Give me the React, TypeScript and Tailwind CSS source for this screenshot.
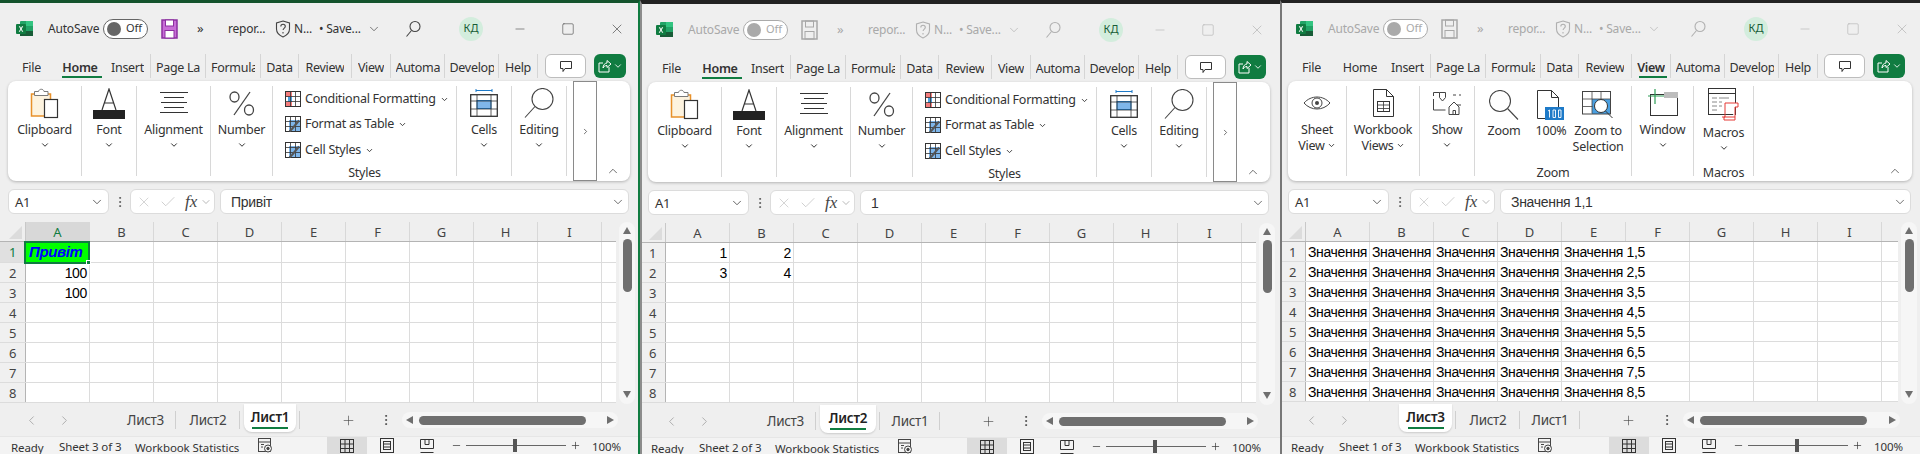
import React from 'react'
import { ChevronDown, ChevronUp, ChevronLeft, ChevronRight, Minus, Plus, Square, X, Check, MoreVertical } from 'lucide-react'

const ui = "font-['Noto_Sans',sans-serif]"

const ExcelLogo = () => (
  <svg width="17" height="17" viewBox="0 0 17 17">
    <rect x="4" y="1" width="13" height="15" rx="1" fill="#21a366" />
    <rect x="10" y="1" width="7" height="5" fill="#33c481" />
    <rect x="4" y="6" width="6" height="5" fill="#107c41" />
    <rect x="10" y="11" width="7" height="5" fill="#185c37" />
    <rect x="4" y="11" width="6" height="5" fill="#185c37" />
    <rect x="0" y="4" width="10" height="10" rx="1" fill="#107c41" />
    <path d="M2.8 6.3l1.6 2.6-1.7 2.8h1.2l1.1-1.9 1.1 1.9h1.2L5.6 8.9l1.6-2.6H6L5 8.1 4 6.3z" fill="#fff" />
  </svg>
)

const SaveIcon = ({ active }: { active: boolean }) => (
  <svg width="17" height="20" viewBox="0 0 17 20">
    <rect x="1" y="1" width="15" height="18" fill={active ? '#c86dd7' : 'none'} stroke={active ? '#8b2fa0' : '#a8a8a8'} strokeWidth="1.5" />
    <rect x="4.5" y="1" width="8" height="6" fill={active ? '#fff' : 'none'} stroke={active ? '#8b2fa0' : '#a8a8a8'} />
    <rect x="4" y="11.5" width="9" height="7.5" fill={active ? '#fff' : 'none'} stroke={active ? '#8b2fa0' : '#a8a8a8'} />
  </svg>
)

const Shield = ({ color }: { color: string }) => (
  <svg width="16" height="18" viewBox="0 0 16 18" fill="none" stroke={color} strokeWidth="1.1">
    <path d="M8 1l6.5 2v6c0 4-3 6.5-6.5 8-3.500-1.500-6.500-4-6.500-8V3z" />
    <path d="M5.800 6.500c0-3 4.500-3 4.500 0 0 1.500-2.200 1.700-2.200 3.500M8 12v1.500" />
  </svg>
)

const SearchIcon = ({ color }: { color: string }) => (
  <svg width="16" height="18" viewBox="0 0 16 18" fill="none" stroke={color} strokeWidth="1.1">
    <circle cx="10" cy="6.500" r="5" />
    <path d="M6.500 10.500L1.500 16.500" />
  </svg>
)

const ClipboardIcon = () => (
  <svg width="30" height="32" viewBox="0 0 30 32" fill="none">
    <rect x="1.500" y="7" width="19" height="22" fill="#fdf3df" stroke="#e8912a" strokeWidth="1.500" />
    <path d="M4.500 8.500V4.500h4c.5-3 5-3 5.500 0h4v4z" fill="#fff" stroke="#7a7a7a" />
    <rect x="14.500" y="12.500" width="13" height="18" fill="#fff" stroke="#333" strokeWidth="1.200" />
  </svg>
)

const FontIcon = () => (
  <svg width="32" height="31" viewBox="0 0 32 31" fill="none">
    <path d="M9 22L16 1l7 21M11 15h10" stroke="#333" strokeWidth="1.200" />
    <rect x="0" y="22" width="32" height="9" fill="#222" />
  </svg>
)

const AlignIcon = () => (
  <svg width="28" height="24" viewBox="0 0 28 24" stroke="#333" strokeWidth="1">
    <path d="M0 1.500h28M4 6.500h20M1 11.500h26M4 16.500h20M0 21.500h28" />
  </svg>
)

const PercentIcon = () => (
  <svg width="26" height="25" viewBox="0 0 26 25" fill="none" stroke="#444" strokeWidth="1.300">
    <ellipse cx="5.500" cy="6" rx="4.500" ry="5" />
    <ellipse cx="20" cy="19" rx="4.500" ry="5" />
    <path d="M21 1L5 24" />
  </svg>
)

const TableSmall = ({ kind }: { kind: 'cond' | 'table' | 'style' }) => (
  <svg width="16" height="16" viewBox="0 0 16 16" fill="none">
    {kind === 'cond' && <>
      <rect x="1" y="1" width="6" height="5" fill="#f47c7c" />
      <rect x="1" y="11" width="6" height="4" fill="#f47c7c" />
      <rect x="3" y="6" width="4" height="5" fill="#4a9fe0" />
    </>}
    {kind !== 'cond' && <rect x="4" y="4" width="11" height="11" fill="#7fb6ea" />}
    <rect x=".5" y=".5" width="15" height="15" stroke="#333" />
    <path d="M.5 5.500h15M.5 10.500h15M5.500 .5v15M10.500 .5v15" stroke="#333" strokeWidth=".8" />
    {kind !== 'cond' && <path d="M14 4.500L7 13M7 13l-2.500 2.500" stroke="#555" strokeWidth="2" />}
  </svg>
)

const CellsIcon = () => (
  <svg width="28" height="28" viewBox="0 0 28 28" fill="none">
    <path d="M6 1.500h16M6 0v3M22 0v3" stroke="#1e7ac8" />
    <rect x="7" y="11.500" width="14" height="8" fill="#7fb6ea" stroke="#1e7ac8" />
    <rect x=".7" y="5.700" width="26.600" height="21.600" stroke="#333" strokeWidth="1.300" />
    <path d="M1 12h26M1 20h26M7 6v21M21 6v21" stroke="#333" strokeWidth=".8" />
  </svg>
)

const Magnifier = ({ size = 30 }: { size?: number }) => (
  <svg width={size} height={size} viewBox="0 0 30 30" fill="none" stroke="#444" strokeWidth="1.100">
    <circle cx="18.500" cy="11" r="10.500" />
    <path d="M11 18.500L1 29.500" />
  </svg>
)

const ZoomGlass = () => (
  <svg width="30" height="30" viewBox="0 0 30 30" fill="none" stroke="#444" strokeWidth="1.100">
    <circle cx="11" cy="11" r="10.500" />
    <path d="M18.500 18.500L29 29.500" />
  </svg>
)

const EyeIcon = () => (
  <svg width="28" height="14" viewBox="0 0 28 14" fill="none" stroke="#444" strokeWidth="1">
    <path d="M1 7c7-8 19-8 26 0-7 8-19 8-26 0z" />
    <circle cx="14" cy="7" r="5" />
    <circle cx="14" cy="7" r="2" fill="#444" stroke="none" />
  </svg>
)

const WorkbookIcon = () => (
  <svg width="21" height="28" viewBox="0 0 21 28" fill="none" stroke="#333">
    <path d="M.5 .5h13l7 7v20H.5zM13.500 .5v7h7" />
    <rect x="4.500" y="12.500" width="12" height="10" />
    <path d="M4.500 16h12M4.500 19.500h12M10.500 12.500v10" strokeWidth=".8" />
  </svg>
)

const ShowIcon = () => (
  <svg width="28" height="23" viewBox="0 0 28 23" fill="none" stroke="#444">
    <path d="M.5 4V.5h6M.5 7v11h12M28 3h-2M23 3h-3M28 13h-4" />
    <path d="M6.500 .5h6v5l-3 3.500-3-3.500z" />
    <path d="M16 22.500V15l5-5 5 5v7.500zM20 22.500v-4h2.500v4" />
  </svg>
)

const HundredIcon = () => (
  <svg width="28" height="30" viewBox="0 0 28 30" fill="none">
    <path d="M.5 .5h14l7 7v21H.5zM14.500 .5v7h7" stroke="#333" />
    <rect x="8" y="17" width="19" height="13" fill="#1e7ac8" />
    <path d="M11 21l1.500-1v7.500M16 20h2.500v7.500H16zM21.500 20H24v7.500h-2.500z" stroke="#fff" strokeWidth=".9" />
  </svg>
)

const ZoomSelIcon = () => (
  <svg width="32" height="28" viewBox="0 0 32 28" fill="none">
    <rect x="10" y="8" width="18" height="15" fill="#4a9fe0" />
    <rect x=".5" y=".5" width="28" height="22.500" stroke="#444" />
    <path d="M.5 8h28M.5 15.500h10M10 .5v22M19 .5v8" stroke="#444" strokeWidth=".8" />
    <circle cx="19" cy="15" r="6.500" fill="#fff" stroke="#333" />
    <path d="M23.500 20l7 7" stroke="#333" />
  </svg>
)

const WindowIcon = () => (
  <svg width="30" height="28" viewBox="0 0 30 28" fill="none">
    <rect x="2.500" y="5.500" width="27" height="21" fill="#fff" stroke="#333" />
    <rect x="16" y="3" width="14" height="6" fill="#bdbdbd" />
    <path d="M0 7h16M7 0v15" stroke="#2e9e56" strokeWidth="1.200" />
  </svg>
)

const MacrosIcon = () => (
  <svg width="31" height="33" viewBox="0 0 31 33" fill="none">
    <rect x=".5" y=".5" width="27" height="26" stroke="#333" />
    <path d="M.5 5.500h27" stroke="#333" />
    <path d="M4 10h5M11 10h10M4 14h5M11 14h3M4 18h5M11 18h3M4 22h5" stroke="#888" />
    <path d="M17 15h13v4h-3v10h-11v3h11v-3" fill="#fff" stroke="#e53935" />
    <path d="M17 15v14M14 29h3" stroke="#e53935" />
  </svg>
)

const SheetStats = () => (
  <svg width="15" height="16" viewBox="0 0 15 16" fill="none" stroke="#444">
    <rect x=".5" y=".5" width="12" height="13" />
    <path d="M.5 4h12M3 6.500h3M3 9h2" />
    <circle cx="10" cy="10.500" r="3.500" fill="#f0f0f0" />
    <circle cx="10" cy="10.500" r="1.200" fill="#444" />
  </svg>
)

const GridView = () => (
  <svg width="14" height="14" viewBox="0 0 14 14" fill="none" stroke="#333">
    <rect x=".5" y=".5" width="13" height="13" />
    <path d="M.5 5h13M.5 9.500h13M5 .5v13M9.500 .5v13" />
  </svg>
)
const PageView = () => (
  <svg width="14" height="15" viewBox="0 0 14 15" fill="none" stroke="#333">
    <rect x=".5" y=".5" width="13" height="14" />
    <rect x="3.500" y="3.500" width="7" height="8" />
    <path d="M3.500 6h7M3.500 9h7" />
  </svg>
)
const BreakView = () => (
  <svg width="14" height="14" viewBox="0 0 14 14" fill="none" stroke="#333">
    <path d="M.5 9.500V.5h13v9h-13M5 .5v5h4v-5" />
    <path d="M.5 13.500h13" />
  </svg>
)

function Title({ active, shifted }: { active: boolean; shifted: boolean }) {
  const tone = active ? 'text-[#333]' : 'text-[#a9a9a9]'
  const stroke = active ? '#444' : '#b0b0b0'
  return (
    <div className={`flex items-center h-[51px] text-[12px] ${tone}`}>
      <div className="w-[48px] pl-[16px] flex"><ExcelLogo /></div>
      <span className="w-[55px] tracking-[-0.2px]">AutoSave</span>
      <div className={`w-[45px] h-[20px] rounded-full border ${active ? 'border-[#666]' : 'border-[#aaa]'} bg-white flex items-center pl-[3px] gap-[5px]`}>
        <div className={`w-[14px] h-[14px] rounded-full ${active ? 'bg-[#666]' : 'bg-[#aaa]'}`} />
        <span className="text-[11px]">Off</span>
      </div>
      <div className="w-[13px]" />
      <SaveIcon active={active} />
      <span className="w-[50px] pl-[19px] text-[13px] leading-none">»</span>
      <span className="w-[47px] tracking-[-0.2px]">repor...</span>
      <Shield color={stroke} />
      <span className="ml-[3px] w-[25px] tracking-[-0.2px]">N...</span>
      <span className="w-[48px] tracking-[-0.2px] whitespace-nowrap">• Save...</span>
      <ChevronDown size={14} strokeWidth={1.2} color={stroke} />
      <div className={shifted ? 'w-[29px]' : 'w-[24px]'} />
      <SearchIcon color={stroke} />
      <div className="w-[38px]" />
      <div className="w-[24px] h-[24px] rounded-full bg-[#d3eddd] flex items-center justify-center text-[11px] text-[#185c37]">КД</div>
      <div className="w-[30px]" />
      <Minus size={14} strokeWidth={1} color={stroke} />
      <div className="w-[34px]" />
      <Square size={14} strokeWidth={1} color={stroke} />
      <div className="w-[34px]" />
      <X size={16} strokeWidth={1} color={stroke} />
    </div>
  )
}

const homeTabs = [
  ['File', 47, false], ['Home', 50, false], ['Insert', 46, true], ['Page La', 55, true], ['Formula', 55, true],
  ['Data', 38, true], ['Review', 53, true], ['View', 39, true], ['Automa', 54, true], ['Develop', 54, true], ['Help', 39, true],
] as const

function Tabs({ current, shifted }: { current: string; shifted: boolean }) {
  return (
    <div className="flex h-[27px] pl-[8px] text-[12.500px] text-[#333] tracking-[-0.3px]">
      {homeTabs.map(([name, w, sep]) => {
        const label = shifted && name === 'Automa' ? 'Automat' : name
        return (
          <div key={name} style={{ width: w }} className={`relative flex justify-center items-center h-[24px] ${sep ? 'border-r border-[#d5d5d5]' : ''}`}>
            <span className={`relative top-[2px] overflow-hidden whitespace-nowrap text-center max-w-[44px] ${current === name ? 'font-semibold' : ''}`}>{label}</span>
            {current === name && <div className="absolute left-[7px] right-[3px] bottom-0 h-[2px] bg-[#107c41]" />}
          </div>
        )
      })}
      <div className={shifted ? 'w-[6px]' : 'w-[7px]'} />
      <div className="w-[41px] h-[24px] bg-white border border-[#bdbdbd] rounded-md flex items-center justify-center">
        <svg width="14" height="13" viewBox="0 0 14 13" fill="none" stroke="#333"><path d="M1.500 1.500h11v7H6l-2 3v-3H1.500z" /></svg>
      </div>
      <div className="w-[8px]" />
      <div className="w-[32px] h-[24px] bg-[#107c41] rounded-md flex items-center justify-center gap-[1px]">
        <svg width="14" height="14" viewBox="0 0 14 14" fill="none" stroke="#fff"><path d="M11 8v5H1V4h4M5 9c0-3 2-5 4-5V1.500l4 3.500-4 3.500V6.500C7 6.500 6 7.500 5 9z" /></svg>
        <ChevronDown size={10} color="#fff" />
      </div>
    </div>
  )
}

function Big({ width, label, icon }: { width: string; label: string; icon: React.ReactNode }) {
  return (
    <div className={`${width} my-[5px] border-r border-[#d8d8d8] flex flex-col items-center shrink-0`}>
      <div className="h-[34px] flex items-center justify-center">{icon}</div>
      <div className="h-[18px] mt-[1px] leading-[18px] whitespace-nowrap">{label}</div>
      <div className="h-[12px] flex items-center"><ChevronDown size={10} strokeWidth={2.400} color="#333" /></div>
    </div>
  )
}

function HomeRibbon() {
  return (
    <>
      <Big width="w-[74px]" label="Clipboard" icon={<ClipboardIcon />} />
      <Big width="w-[55px]" label="Font" icon={<FontIcon />} />
      <Big width="w-[74px]" label="Alignment" icon={<AlignIcon />} />
      <Big width="w-[62px]" label="Number" icon={<PercentIcon />} />
      <div className="w-[184px] my-[5px] border-r border-[#d8d8d8] flex flex-col pl-[12px] shrink-0">
        <div className="h-[24px] mt-[1px] flex items-center gap-[4px] whitespace-nowrap"><TableSmall kind="cond" />Conditional Formatting<ChevronDown size={9} strokeWidth={2.400} /></div>
        <div className="h-[26px] flex items-center gap-[4px] whitespace-nowrap"><TableSmall kind="table" />Format as Table<ChevronDown size={9} strokeWidth={2.400} /></div>
        <div className="h-[26px] flex items-center gap-[4px] whitespace-nowrap"><TableSmall kind="style" />Cell Styles<ChevronDown size={9} strokeWidth={2.400} /></div>
        <div className="h-[16px] mt-auto -mb-[5px] leading-[16px] text-center pr-[12px]">Styles</div>
      </div>
      <Big width="w-[55px]" label="Cells" icon={<CellsIcon />} />
      <Big width="w-[55px]" label="Editing" icon={<Magnifier />} />
      <div className="w-[24px] ml-[6px] border-x border-b border-t border-[#8a8a8a] flex items-center justify-center shrink-0">
        <ChevronRight size={9} strokeWidth={2} color="#444" />
      </div>
    </>
  )
}

function SubZoom({ width, icon, lines }: { width: string; icon: React.ReactNode; lines: string[] }) {
  return (
    <div className={`${width} flex flex-col items-center`}>
      <div className="h-[37px] flex items-center">{icon}</div>
      {lines.map(l => <div key={l} className="h-[16px] leading-[16px] whitespace-nowrap">{l}</div>)}
    </div>
  )
}

function ViewRibbon() {
  return (
    <>
      <div className="w-[59px] my-[5px] border-r border-[#d8d8d8] flex flex-col items-center shrink-0">
        <div className="h-[34px] flex items-center"><EyeIcon /></div>
        <div className="h-[16px] mt-[1px] leading-[18px]">Sheet</div>
        <div className="h-[17px] leading-[17px] flex items-center gap-[2px]">View<ChevronDown size={9} strokeWidth={2.400} /></div>
      </div>
      <div className="w-[73px] my-[5px] border-r border-[#d8d8d8] flex flex-col items-center shrink-0">
        <div className="h-[34px] flex items-center"><WorkbookIcon /></div>
        <div className="h-[16px] mt-[1px] leading-[18px]">Workbook</div>
        <div className="h-[17px] leading-[17px] flex items-center gap-[2px]">Views<ChevronDown size={9} strokeWidth={2.400} /></div>
      </div>
      <Big width="w-[55px]" label="Show" icon={<ShowIcon />} />
      <div className="w-[157px] my-[5px] border-r border-[#d8d8d8] flex flex-col shrink-0">
        <div className="flex">
          <SubZoom width="w-[58px]" icon={<ZoomGlass />} lines={['Zoom']} />
          <SubZoom width="w-[36px]" icon={<HundredIcon />} lines={['100%']} />
          <SubZoom width="w-[58px]" icon={<ZoomSelIcon />} lines={['Zoom to', 'Selection']} />
        </div>
        <div className="h-[16px] mt-auto -mb-[5px] leading-[16px] text-center">Zoom</div>
      </div>
      <Big width="w-[62px]" label="Window" icon={<WindowIcon />} />
      <div className="w-[60px] my-[5px] border-r border-[#d8d8d8] flex flex-col items-center shrink-0">
        <div className="h-[37px] flex items-center"><MacrosIcon /></div>
        <div className="h-[18px] mt-[1px] leading-[18px]">Macros</div>
        <div className="h-[12px] flex items-center"><ChevronDown size={10} strokeWidth={2.400} color="#333" /></div>
        <div className="h-[16px] mt-auto -mb-[5px] leading-[16px]">Macros</div>
      </div>
    </>
  )
}

function FormulaBar({ value, wide }: { value: string; wide: boolean }) {
  return (
    <div className="flex items-center h-[25px] mt-[8px] pl-[8px] text-[13px] text-[#333]">
      <div className="w-[101px] h-full bg-white border border-[#dcdcdc] rounded-md flex items-center justify-between pl-[6px] pr-[4px] tracking-[-0.3px]">
        <span className="relative top-[1px]">A1</span><ChevronDown size={14} strokeWidth={1.300} />
      </div>
      <div className="w-[21px] flex justify-center"><MoreVertical size={14} strokeWidth={1.500} color="#555" /></div>
      <div className="w-[85px] h-full bg-white border border-[#dcdcdc] rounded-md flex items-center pl-[5px] text-[#c0c0c0]">
        <X size={16} strokeWidth={1} />
        <Check size={18} strokeWidth={1} className="ml-[7px]" />
        <span className="ml-[8px] font-['Liberation_Serif',serif] italic text-[17px] text-[#444] leading-none">fx</span>
        <ChevronDown size={12} strokeWidth={1.200} className="ml-[3px] text-[#888]" />
      </div>
      <div className={`${wide ? 'w-[411px]' : 'w-[409px]'} ml-[5px] h-full bg-white border border-[#dcdcdc] rounded-md flex items-center justify-between pl-[10px] pr-[3px] font-['Liberation_Sans',sans-serif] text-[14px] tracking-[-0.3px]`}>
        <span className="relative top-[1px]">{value}</span><ChevronDown size={14} strokeWidth={1.200} />
      </div>
    </div>
  )
}

const cols = ['A', 'B', 'C', 'D', 'E', 'F', 'G', 'H', 'I']
const rowNums = [1, 2, 3, 4, 5, 6, 7, 8]

function Sheet({ kind }: { kind: 1 | 2 | 3 }) {
  const cellText = (r: number, c: number) => {
    if (kind === 1 && c === 0 && r > 1 && r < 4) return '100'
    if (kind === 2 && r === 1 && c < 2) return String(c + 1)
    if (kind === 2 && r === 2 && c < 2) return String(c + 3)
    if (kind === 3 && c < 4) return 'Значення'
    if (kind === 3 && c === 4) return `Значення ${r},5`
    return ''
  }
  return (
    <div className={`${kind === 3 ? 'w-[618px]' : 'w-[616px]'} overflow-hidden h-full font-['Liberation_Sans',sans-serif]`}>
      <div className="flex h-[19px] border-b-2 border-[#b4b4b4] box-content -mb-[1px]">
        <div className="w-[26px] border-r border-[#c8c8c8] flex items-end justify-end pr-[3px] pb-[2px]">
          <div className="w-0 h-0 border-l-[13px] border-l-transparent border-b-[13px] border-b-[#dcdcdc]" />
        </div>
        {cols.map((c, i) => (
          <div key={c} className={`w-[64px] border-r border-[#d8d8d8] flex items-center justify-center pt-[2px] text-[13px] shrink-0 ${ui} ${kind === 1 && i === 0 ? 'bg-[#d8d8d8] text-[#107c41]' : 'text-[#444]'}`}>{c}</div>
        ))}
      </div>
      {rowNums.map(r => (
        <div key={r} className={`flex ${r === 1 && kind === 1 ? 'h-[21px]' : 'h-[20px]'} border-b border-[#dcdcdc] bg-white`}>
          <div className={`w-[26px] shrink-0 border-r border-[#b4b4b4] flex items-center pl-[9px] pt-[2px] text-[13px] ${ui} ${kind === 1 && r === 1 ? 'bg-[#e0e0e0] text-[#107c41]' : 'bg-[#f0f0f0] text-[#444]'}`}>{r}</div>
          {cols.map((c, i) => {
            const text = cellText(r, i)
            const selected = kind === 1 && r === 1 && i === 0
            const spill = kind === 3 && i === 4
            const numeric = /^\d+$/.test(text)
            return (
              <div key={c} className={`relative w-[64px] shrink-0 flex items-center whitespace-nowrap tracking-[-0.35px] pt-[1px] ${spill ? 'border-r border-transparent z-10' : selected ? 'border-r border-[#dcdcdc]' : 'border-r border-[#dcdcdc] overflow-hidden'} ${numeric ? 'justify-end pr-[2px]' : 'pl-[2px]'} ${selected ? 'bg-[#00ff00] text-[#0000ff] font-bold italic text-[15px] pl-[3px] z-20' : 'text-black text-[14px]'}`}>
                {selected ? 'Привіт' : text}
                {selected && (
                  <>
                    <div className="absolute -left-[2px] -top-[1px] w-[66px] h-[23px] border-2 border-[#107c41]" />
                    <div className="absolute -right-[2px] -bottom-[3px] w-[5px] h-[5px] bg-[#107c41] border border-white" />
                  </>
                )}
              </div>
            )
          })}
        </div>
      ))}
    </div>
  )
}

function VScroll() {
  return (
    <div className="w-[16px] ml-[3px] h-[182px] bg-[#f6f6f6] rounded-lg flex flex-col items-center pt-[5px] pb-[6px]">
      <div className="w-0 h-0 border-x-[4.500px] border-x-transparent border-b-[7px] border-b-[#6f6f6f]" />
      <div className="w-[9px] h-[53px] mt-[5px] bg-[#6f6f6f] rounded-full" />
      <div className="w-0 h-0 border-x-[4.500px] border-x-transparent border-t-[7px] border-t-[#6f6f6f] mt-auto" />
    </div>
  )
}

function SheetTab({ name, active, width, sep }: { name: string; active: boolean; width: string; sep: boolean }) {
  return (
    <div className={`${width} h-full flex items-start relative`}>
      {active ? (
        <div className="mx-[4px] flex-1 h-[28px] bg-white rounded-b-lg shadow-[0_1px_2px_rgba(0,0,0,0.15)] flex flex-col items-center pt-[3px] font-semibold text-[#222]">
          <span className="h-[20px] leading-[20px]">{name}</span>
          <div className="w-[36px] h-[2px] bg-[#107c41]" />
        </div>
      ) : (
        <div className="flex-1 h-[32px] flex items-center justify-center pt-[1px]">{name}</div>
      )}
      {sep && <div className="absolute right-0 top-[7px] h-[18px] border-r border-[#cfcfcf]" />}
    </div>
  )
}

function SheetBar({ active, wide }: { active: number; wide: boolean }) {
  return (
    <div className={`flex h-[32px] items-start text-[13.500px] text-[#444] tracking-[-0.3px] ${ui}`}>
      <div className="w-[115px] h-full flex items-center pl-[24px] gap-[18px]">
        <ChevronLeft size={15} strokeWidth={1.200} color="#999" />
        <ChevronRight size={15} strokeWidth={1.200} color="#999" />
      </div>
      <SheetTab name="Лист3" active={active === 3} width="w-[61px]" sep />
      <SheetTab name="Лист2" active={active === 2} width="w-[64px]" sep />
      <SheetTab name="Лист1" active={active === 1} width="w-[60px]" sep />
      <div className="w-[56px] h-full flex items-center justify-end"><Plus size={15} strokeWidth={1} color="#444" /></div>
      <div className={`${wide ? 'w-[39px]' : 'w-[38px]'} h-full flex items-center justify-center pl-[22px]`}><MoreVertical size={14} strokeWidth={1.500} color="#444" /></div>
      <div className={`${wide ? 'w-[217px]' : 'w-[216px]'} ml-[8px] mt-[8px] h-[16px] bg-[#f6f6f6] rounded-full flex items-center pl-[4px] pr-[4px]`}>
        <div className="w-0 h-0 border-y-[4.500px] border-y-transparent border-r-[7px] border-r-[#6f6f6f]" />
        <div className="w-[167px] h-[9px] ml-[6px] bg-[#6f6f6f] rounded-full" />
        <div className="w-0 h-0 ml-auto border-y-[4.500px] border-y-transparent border-l-[7px] border-l-[#6f6f6f]" />
      </div>
    </div>
  )
}

function StatusBar({ label, wide }: { label: string; wide: boolean }) {
  return (
    <div className="flex h-[18px] items-center bg-[#f3f3f3] text-[11.500px] text-[#333] tracking-[-0.1px] border-t border-[#e6e6e6] whitespace-nowrap">
      <span className="w-[59px] pl-[11px] pt-[4px]">Ready</span>
      <span className="w-[76px] pt-[2px]">{label}</span>
      <span className="w-[123px] pt-[4px]">Workbook Statistics</span>
      <SheetStats />
      <div className={wide ? 'w-[56px]' : 'w-[54px]'} />
      <div className="w-[40px] h-full bg-[#dcdcdc] flex items-center justify-center"><GridView /></div>
      <div className="w-[40px] flex justify-center"><PageView /></div>
      <div className="w-[40px] flex justify-center"><BreakView /></div>
      <Minus size={11} strokeWidth={1.500} className="ml-[4px]" />
      <div className="relative w-[100px] h-[1px] bg-[#666] ml-[4px]">
        <div className="absolute left-[47px] -top-[6px] w-[4px] h-[13px] bg-[#555]" />
      </div>
      <Plus size={11} strokeWidth={1.500} className="ml-[4px]" />
      <span className="ml-[11px] pt-[2px]">100%</span>
    </div>
  )
}

function ExcelWindow({ kind }: { kind: 1 | 2 | 3 }) {
  const active = kind === 1
  const wide = kind === 3
  const frame = kind === 1
    ? 'border-t-[3px] border-t-[#14532d] border-r-2 border-r-[#107c41]'
    : kind === 2
      ? 'border-t-[4px] border-t-[#222] border-l-2 border-l-[#8c8c8c]'
      : 'border-t-[3px] border-t-[#222] border-l-2 border-l-[#777]'
  const sheetNo = kind === 1 ? 3 : kind === 2 ? 2 : 1
  return (
    <div className={`w-[640px] h-[454px] shrink-0 bg-[#efefef] flex flex-col overflow-hidden ${frame} ${ui}`}>
      <div className={kind === 1 ? 'w-[640px]' : kind === 2 ? 'w-[640px] -ml-[2px]' : 'w-[642px] -ml-[2px]'}>
        <Title active={active} shifted={wide} />
        <Tabs current={wide ? 'View' : 'Home'} shifted={wide} />
        <div className={`${wide ? 'w-[624px]' : 'w-[622px]'} ml-[8px] h-[100px] bg-white rounded-lg shadow-[0_1px_3px_rgba(0,0,0,0.25)] flex items-stretch text-[12.500px] text-[#333] tracking-[-0.25px]`}>
          {wide ? <ViewRibbon /> : <HomeRibbon />}
          <div className="ml-auto self-end pb-[3px] pr-[10px]"><ChevronUp size={14} strokeWidth={1.300} color="#444" /></div>
        </div>
        <FormulaBar value={kind === 1 ? 'Привіт' : kind === 2 ? '1' : 'Значення 1,1'} wide={wide} />
        <div className="flex mt-[8px] h-[182px]">
          <Sheet kind={kind} />
          <VScroll />
        </div>
        <SheetBar active={kind} wide={wide} />
        <StatusBar label={`Sheet ${sheetNo} of 3`} wide={wide} />
      </div>
    </div>
  )
}

export default function App() {
  return (
    <div className="flex w-[1920px] h-[454px] overflow-hidden bg-[#222]">
      <ExcelWindow kind={1} />
      <ExcelWindow kind={2} />
      <ExcelWindow kind={3} />
    </div>
  )
}
